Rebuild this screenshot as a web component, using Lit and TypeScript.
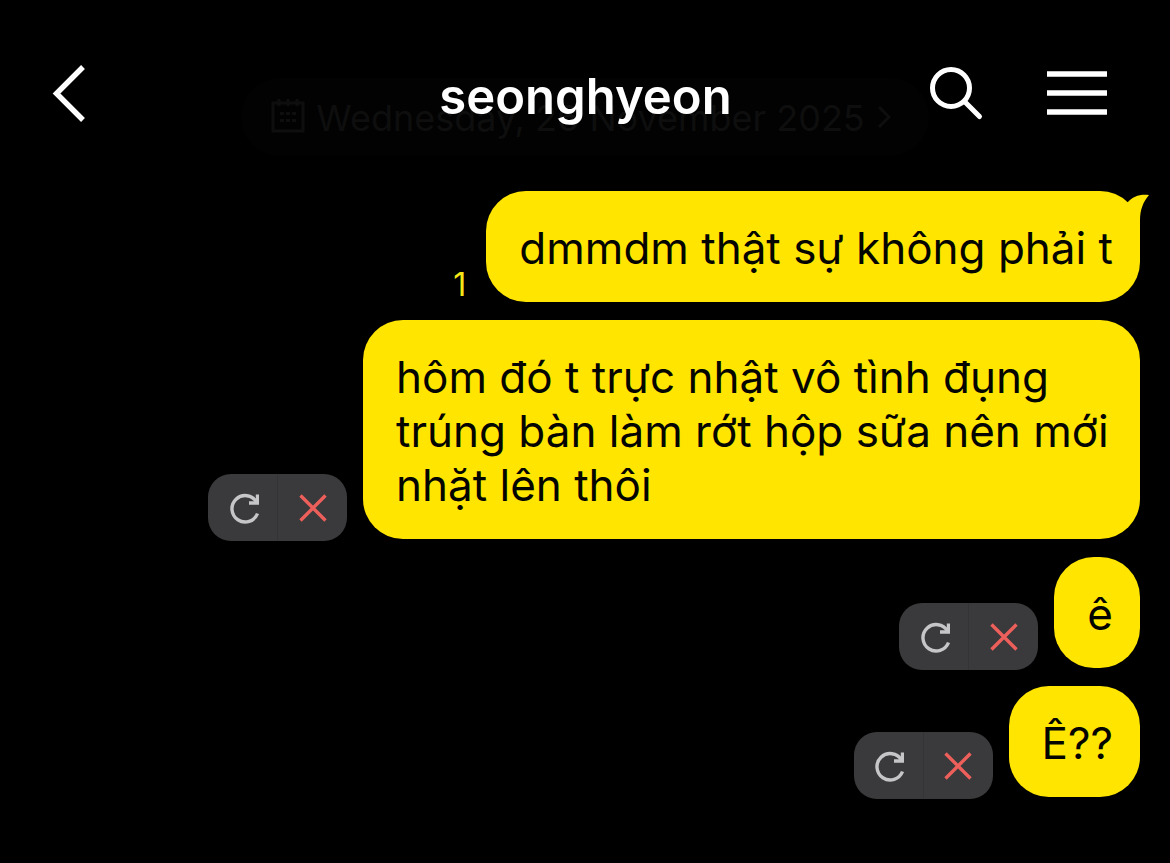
import { LitElement, html, css, svg, nothing } from "lit";
import { customElement, property } from "lit/decorators.js";

interface Message {
  text: string;
  tail?: boolean;
  unread?: number;
  failed?: boolean;
}

const MESSAGES: Message[] = [
  { text: "dmmdm thật sự không phải t", tail: true, unread: 1 },
  {
    text: "hôm đó t trực nhật vô tình đụng trúng bàn làm rớt hộp sữa nên mới nhặt lên thôi",
    failed: true,
  },
  { text: "ê", failed: true },
  { text: "Ê??", failed: true },
];

@customElement("chat-message")
export class ChatMessage extends LitElement {
  @property({ attribute: false }) message!: Message;

  static styles = css`
    :host {
      display: flex;
      justify-content: flex-end;
      align-items: flex-end;
      gap: 16px;
    }
    .bubble {
      position: relative;
      box-sizing: border-box;
      max-width: 777px;
      margin: 0;
      padding: 30px 27px 27px 33px;
      border-radius: 40px;
      background: #ffe500;
      color: #050500;
      font-size: 44px;
      line-height: 54px;
    }
    .tail {
      position: absolute;
      top: 3px;
      right: -9px;
      width: 22px;
      height: 38px;
      fill: #ffe500;
    }
    .unread {
      color: #f5e616;
      font-size: 32px;
      line-height: 34px;
      padding-right: 4px;
    }
    .retry {
      display: flex;
      flex: none;
      margin-bottom: -2px;
      border-radius: 23px;
      background: #3a3a3c;
      overflow: hidden;
    }
    .action {
      display: flex;
      align-items: center;
      justify-content: center;
      width: 69px;
      height: 67px;
      padding: 0;
      border: 0;
      background: none;
      color: #ec5f5a;
      cursor: pointer;
    }
    .action:first-child {
      width: 70px;
      border-right: 1px solid #343436;
      color: #c6c6c8;
    }
    .action svg {
      width: 32px;
      height: 32px;
      fill: none;
      stroke: currentColor;
      stroke-width: 3.4;
    }
  `;

  render() {
    const { text, tail, unread, failed } = this.message;
    return html`
      ${unread ? html`<span class="unread">${unread}</span>` : nothing}
      ${failed
        ? html`<div class="retry">
            <button class="action" aria-label="Resend">
              <svg viewBox="-2 0 32 32" aria-hidden="true">
                <path d="M28.5 21.5A13.2 13.2 0 1 1 27.5 10" />
                <path d="M28.500 2.5V11H20" />
              </svg>
            </button>
            <button class="action" aria-label="Delete">
              <svg viewBox="0 0 32 32" aria-hidden="true">
                <path d="M3.5 3.5L28.5 28.5M28.5 3.5L3.5 28.5" />
              </svg>
            </button>
          </div>`
        : nothing}
      <p class="bubble">
        ${text}${tail
          ? html`<svg class="tail" viewBox="0 0 22 38" aria-hidden="true">
              ${svg`<path d="M0 9C6 2 13 0 22 1C16 8 13 16 13 26V38L0 30Z" />`}
            </svg>`
          : nothing}
      </p>
    `;
  }
}

@customElement("app-root")
export class AppRoot extends LitElement {
  static styles = css`
    :host {
      display: block;
      position: relative;
      min-height: 100vh;
      background: #000;
      font-family: Inter, "Noto Sans", sans-serif;
    }
    .header {
      position: absolute;
      inset: 0 0 auto 0;
      display: grid;
      grid-template-columns: 1fr auto 1fr;
      align-items: center;
      padding: 58px 63px 0 52px;
      color: #fff;
    }
    .title {
      margin: 0;
      padding: 9px 0 0 12px;
      font-size: 49px;
      font-weight: 600;
      line-height: 60px;
    }
    .tools {
      display: flex;
      justify-content: flex-end;
      align-items: center;
      gap: 63px;
    }
    .icon {
      display: flex;
      padding: 0;
      border: 0;
      background: none;
      color: inherit;
      cursor: pointer;
      justify-self: start;
    }
    .icon svg,
    .date svg {
      display: block;
      fill: none;
      stroke: currentColor;
    }
    .chat {
      display: flex;
      flex-direction: column;
      padding: 78px 30px 66px;
    }
    .date {
      display: flex;
      align-items: center;
      align-self: center;
      gap: 11px;
      height: 78px;
      padding: 0 37px 0 30px;
      margin-bottom: 35px;
      border: 0;
      border-radius: 39px;
      background: #020202;
      color: #0e0e0e;
      font: inherit;
      font-size: 36px;
      line-height: 44px;
      cursor: pointer;
    }
    .date span {
      padding-top: 2px;
    }
    .list {
      display: flex;
      flex-direction: column;
      gap: 18px;
    }
  `;

  render() {
    return html`
      <main class="chat">
        <button class="date">
          <svg width="34" height="36" viewBox="0 0 34 36" stroke-width="3" aria-hidden="true">
            <path d="M2 4H32V32H2Z M8 0V7M17 0V7M26 0V7" />
            <path d="M9 14.500H25M9 21.500H25" stroke-dasharray="4 2" />
          </svg>
          <span>Wednesday, 26 November 2025</span>
          <svg width="16" height="24" viewBox="0 0 16 24" stroke-width="3" aria-hidden="true">
            <path d="M3 2L13 12L3 22" />
          </svg>
        </button>
        <div class="list">
          ${MESSAGES.map((m) => html`<chat-message .message=${m}></chat-message>`)}
        </div>
      </main>
      <header class="header">
        <button class="icon" aria-label="Back">
          <svg width="34" height="58" viewBox="0 0 34 58" stroke-width="5.400">
            <path d="M31 3L4.500 29.500L31 56" />
          </svg>
        </button>
        <h1 class="title">seonghyeon</h1>
        <div class="tools">
          <button class="icon" aria-label="Search">
            <svg width="56" height="56" viewBox="0 0 56 56" stroke-width="5">
              <circle cx="23" cy="23" r="18.500" />
              <path d="M36.500 36.500L51.500 51.500" stroke-linecap="round" />
            </svg>
          </button>
          <button class="icon" aria-label="Menu">
            <svg width="60" height="46" viewBox="0 0 60 46" stroke-width="5.400">
              <path d="M0 4H60M0 23H60M0 42H60" />
            </svg>
          </button>
        </div>
      </header>
    `;
  }
}
